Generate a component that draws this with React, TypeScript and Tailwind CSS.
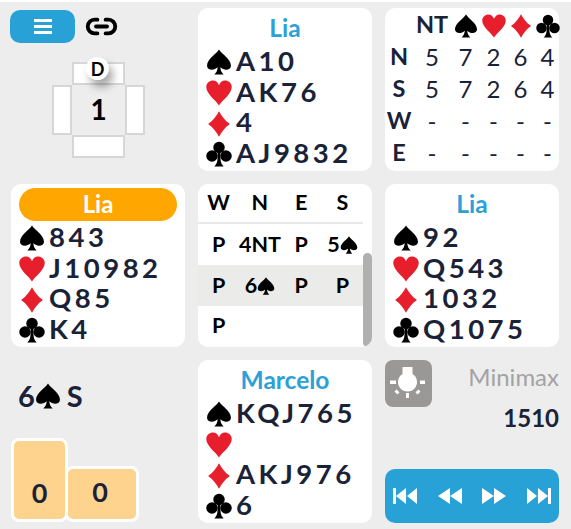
import { Link2 } from "lucide-react";

type Suit = "S" | "H" | "D" | "C";

const RED = "#e71f2d";

function SuitIcon({ suit, size = 26 }: { suit: Suit; size?: number }) {
  const fill = suit === "H" || suit === "D" ? RED : "#000000";
  return (
    <svg width={size} height={size} viewBox="0 0 100 100" className="shrink-0" fill={fill}>
      {suit === "S" && (
        <path d="M50 2C60 20 96 38 96 64C96 80 72 86 55 70C56 82 60 91 68 98L32 98C40 91 44 82 45 70C28 86 4 80 4 64C4 38 40 20 50 2Z" />
      )}
      {suit === "H" && (
        <path d="M50 98C38 78 1 54 1 27C1 12 14 2 27 2C38 2 46 10 50 20C54 10 62 2 73 2C86 2 99 12 99 27C99 54 62 78 50 98Z" />
      )}
      {suit === "D" && (
        <path d="M50 1C60 20 72 36 92 50C72 64 60 80 50 99C40 80 28 64 8 50C28 36 40 20 50 1Z" />
      )}
      {suit === "C" && (
        <>
          <circle cx="50" cy="25" r="22" />
          <circle cx="23" cy="58" r="22" />
          <circle cx="77" cy="58" r="22" />
          <path d="M45 45L55 45L56 72C57 82 61 91 68 98L32 98C39 91 43 82 44 72Z" />
        </>
      )}
    </svg>
  );
}

function HandRows({ cards }: { cards: [string, string, string, string] }) {
  const suits: Suit[] = ["S", "H", "D", "C"];
  return (
    <div className="flex flex-col pl-2">
      {suits.map((s, i) => (
        <div key={s} className="flex h-[30.7px] items-center gap-1">
          <SuitIcon suit={s} />
          <span className="pb-[3px] text-[27.5px] font-bold leading-none tracking-[3.5px] text-[#1a2238]">{cards[i]}</span>
        </div>
      ))}
    </div>
  );
}

function Hand({ name, cards }: { name: string; cards: [string, string, string, string] }) {
  return (
    <div className="h-[163px] rounded-[10px] bg-white">
      <div className="flex h-[39px] items-center justify-center pt-px text-[24.5px] font-bold leading-none text-[#2ba1d8]">
        {name}
      </div>
      <HandRows cards={cards} />
    </div>
  );
}

function ActiveHand({ name, cards }: { name: string; cards: [string, string, string, string] }) {
  return (
    <div className="h-[163px] rounded-[10px] bg-white">
      <div className="h-[39px] px-2 pt-1">
        <div className="flex h-[33px] items-center justify-center rounded-full bg-[#ffa600] pb-[2px] text-[24px] font-bold leading-none text-white">
          {name}
        </div>
      </div>
      <HandRows cards={cards} />
    </div>
  );
}

function Seat() {
  return <div className="border-2 border-[#d6d6d6] bg-white" />;
}

function TableDiagram() {
  return (
    <div className="relative ml-[41px] mt-[19px] grid w-[93px] grid-cols-[20px_53px_20px] grid-rows-[23px_50px_23px]">
      <div />
      <Seat />
      <div />
      <Seat />
      <div className="flex items-center justify-center pb-[2px] text-[28px] font-bold leading-none text-black">1</div>
      <Seat />
      <div />
      <Seat />
      <div />
      <div className="absolute left-[34px] top-[-5px] flex h-[23px] w-[23px] items-center justify-center rounded-full bg-white text-[18px] font-bold leading-none text-black shadow-[4px_7px_8px_rgba(0,0,0,0.35)]">
        D
      </div>
    </div>
  );
}

function MenuPanel() {
  return (
    <div className="h-[163px] pt-[2px]">
      <div className="-ml-px flex items-center gap-[10px]">
        <button className="flex h-[33px] w-[65px] flex-col items-center justify-center gap-[3px] rounded-[10px] bg-[#27a1d6]">
          <span className="h-[3px] w-[18px] bg-white" />
          <span className="h-[3px] w-[18px] bg-white" />
          <span className="h-[3px] w-[18px] bg-white" />
        </button>
        <Link2 size={33} strokeWidth={2.8} className="text-black" />
      </div>
      <TableDiagram />
    </div>
  );
}

function ScoreTable() {
  const rows: [string, string[]][] = [
    ["N", ["5", "7", "2", "6", "4"]],
    ["S", ["5", "7", "2", "6", "4"]],
    ["W", ["-", "-", "-", "-", "-"]],
    ["E", ["-", "-", "-", "-", "-"]],
  ];
  const suits: Suit[] = ["S", "H", "D", "C"];
  return (
    <div className="grid h-[163px] grid-cols-[28px_38px_29px_27px_27px_27px] grid-rows-[33px_32px_32px_32px_32px] rounded-[10px] bg-white text-[#1a2238]">
      <div />
      <div className="flex items-center justify-center pt-[1px] text-[23.5px] font-bold leading-none">NT</div>
      {suits.map((s) => (
        <div key={s} className="flex items-center justify-center pt-[2px]">
          <SuitIcon suit={s} size={24} />
        </div>
      ))}
      {rows.map(([seat, vals]) => (
        <div key={seat} className="contents">
          <div className="flex items-center justify-center text-[23.5px] font-bold leading-none">{seat}</div>
          {vals.map((v, i) => (
            <div key={i} className="flex items-center justify-center text-[24px] leading-none">
              {v}
            </div>
          ))}
        </div>
      ))}
    </div>
  );
}

function Bid({ value }: { value: string }) {
  const spade = value.endsWith("S") && value.length > 1;
  return (
    <div className="flex items-center justify-center text-[21.5px] font-bold leading-none text-black">
      {spade ? value.slice(0, -1) : value}
      {spade && <SuitIcon suit="S" size={18} />}
    </div>
  );
}

function BiddingPanel() {
  return (
    <div className="flex h-[163px] overflow-hidden rounded-[10px] bg-white">
      <div className="w-[165px]">
        <div className="grid h-[40px] grid-cols-4 border-b-2 border-[#e8e8e8]">
          {["W", "N", "E", "S"].map((h) => (
            <Bid key={h} value={h} />
          ))}
        </div>
        <div className="grid h-[41px] grid-cols-4">
          {["P", "4NT", "P", "5S"].map((b, i) => (
            <Bid key={i} value={b} />
          ))}
        </div>
        <div className="grid h-[41px] grid-cols-4 bg-[#ebebe9]">
          {["P", "6S", "P", "P"].map((b, i) => (
            <Bid key={i} value={b} />
          ))}
        </div>
        <div className="grid h-[39px] grid-cols-4">
          <Bid value="P" />
        </div>
      </div>
      <div className="flex-1 pt-[69px]">
        <div className="h-[94px] rounded-full bg-[#b0b0b0]" />
      </div>
    </div>
  );
}

function ContractPanel() {
  return (
    <div className="flex h-[163px] flex-col">
      <div className="mt-[21px] flex items-center pl-[7px] text-[29px] font-bold leading-none text-[#1a2238]">
        6<SuitIcon suit="S" size={26} />
        <span className="ml-[6px]">S</span>
      </div>
      <div className="mt-auto flex items-end pb-[1px]">
        <div className="z-10 flex h-[84px] w-[57px] items-end justify-center rounded-[8px] border-[3px] border-white bg-[#fdd38d] pb-[13px] text-[27px] font-bold leading-none text-[#1a2238]">
          0
        </div>
        <div className="-ml-[3px] flex h-[56px] w-[74px] items-center justify-center rounded-[8px] border-[3px] border-white bg-[#fdd38d] pb-[6px] pr-[4px] text-[27px] font-bold leading-none text-[#1a2238]">
          0
        </div>
      </div>
    </div>
  );
}

function BulbIcon() {
  return (
    <svg width="47" height="47" viewBox="0 0 47 47" fill="white">
      <path d="M17.5 7H27.5V14A9.5 9.5 0 1 1 17.5 14Z" />
      <rect x="5" y="20.5" width="6" height="3.5" />
      <rect x="35" y="20.5" width="5" height="3.5" />
      <rect x="21" y="33" width="3" height="5" />
      <rect x="10" y="30.5" width="4" height="3" transform="rotate(40 12 32)" />
      <rect x="31" y="30.5" width="4" height="3" transform="rotate(-40 33 32)" />
    </svg>
  );
}

function Transport() {
  return (
    <div className="flex h-[54px] items-center justify-between rounded-[10px] bg-[#27a1d6] px-2">
      <svg width="24" height="16" viewBox="0 0 24 16" fill="white">
        <rect x="0" y="0" width="3" height="16" />
        <path d="M3 8L13 0V16Z" />
        <path d="M14 8L24 0V16Z" />
      </svg>
      <svg width="24" height="16" viewBox="0 0 24 16" fill="white">
        <path d="M0 8L12 0V16Z" />
        <path d="M12 8L24 0V16Z" />
      </svg>
      <svg width="24" height="16" viewBox="0 0 24 16" fill="white">
        <path d="M24 8L12 0V16Z" />
        <path d="M12 8L0 0V16Z" />
      </svg>
      <svg width="24" height="16" viewBox="0 0 24 16" fill="white">
        <rect x="21" y="0" width="3" height="16" />
        <path d="M21 8L11 0V16Z" />
        <path d="M10 8L0 0V16Z" />
      </svg>
    </div>
  );
}

function ControlPanel() {
  return (
    <div className="flex h-[163px] flex-col">
      <div className="flex items-start justify-between">
        <div className="h-[47px] w-[47px] rounded-[8px] bg-[#9a9896]">
          <BulbIcon />
        </div>
        <div className="pt-[3px] text-[24px] leading-[28px] text-[#a3a3a3]">Minimax</div>
      </div>
      <div className="-mt-[3px] text-right text-[24px] font-bold leading-[28px] text-[#1a2238]">1510</div>
      <div className="mt-auto">
        <Transport />
      </div>
    </div>
  );
}

export default function App() {
  return (
    <div
      className="h-[529px] w-[571px] overflow-hidden border-t-2 border-white bg-[#ededed] pl-[11px] pt-[6px]"
      style={{ fontFamily: 'Lato, "Liberation Sans", sans-serif' }}
    >
      <div className="grid grid-cols-[174px_174px_174px] gap-[13px]">
        <MenuPanel />
        <Hand name="Lia" cards={["A10", "AK76", "4", "AJ9832"]} />
        <ScoreTable />
        <ActiveHand name="Lia" cards={["843", "J10982", "Q85", "K4"]} />
        <BiddingPanel />
        <Hand name="Lia" cards={["92", "Q543", "1032", "Q1075"]} />
        <ContractPanel />
        <Hand name="Marcelo" cards={["KQJ765", "", "AKJ976", "6"]} />
        <ControlPanel />
      </div>
    </div>
  );
}
